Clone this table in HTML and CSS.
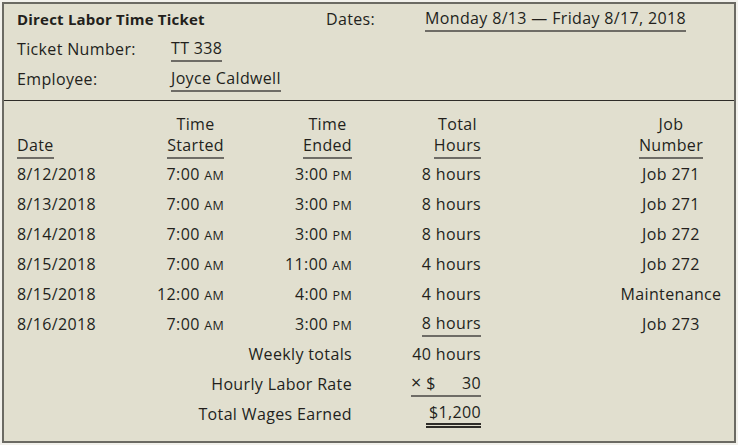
FILE: index.html
```html
<!DOCTYPE html>
<html>
<head>
<meta charset="utf-8">
<link rel="stylesheet" href="styles.css">
</head>
<body>
<div class="ticket">
  <div class="top">
    <div class="info-row">
      <div class="title">Direct Labor Time Ticket</div>
      <div class="dates-label">Dates:</div>
      <div class="dates-value"><span class="ul">Monday 8/13 — Friday 8/17, 2018</span></div>
    </div>
    <div class="info-row">
      <div class="label">Ticket Number:</div>
      <div class="value"><span class="ul">TT 338</span></div>
    </div>
    <div class="info-row">
      <div class="label">Employee:</div>
      <div class="value"><span class="ul">Joyce Caldwell</span></div>
    </div>
  </div>
  <div class="bottom">
    <div class="grid head">
      <div class="c1 hcell"><span class="ul">Date</span></div>
      <div class="c hcell"><div>Time</div><span class="ul">Started</span></div>
      <div class="c hcell"><div>Time</div><span class="ul">Ended</span></div>
      <div class="c hcell"><div>Total</div><span class="ul">Hours</span></div>
      <div class="job hcell"><div>Job</div><span class="ul">Number</span></div>
    </div>
    <div class="grid row"><div class="c1">8/12/2018</div><div class="c">7:00 <span class="sc">AM</span></div><div class="c">3:00 <span class="sc">PM</span></div><div class="c">8 hours</div><div class="job">Job 271</div></div>
    <div class="grid row"><div class="c1">8/13/2018</div><div class="c">7:00 <span class="sc">AM</span></div><div class="c">3:00 <span class="sc">PM</span></div><div class="c">8 hours</div><div class="job">Job 271</div></div>
    <div class="grid row"><div class="c1">8/14/2018</div><div class="c">7:00 <span class="sc">AM</span></div><div class="c">3:00 <span class="sc">PM</span></div><div class="c">8 hours</div><div class="job">Job 272</div></div>
    <div class="grid row"><div class="c1">8/15/2018</div><div class="c">7:00 <span class="sc">AM</span></div><div class="c">11:00 <span class="sc">AM</span></div><div class="c">4 hours</div><div class="job">Job 272</div></div>
    <div class="grid row"><div class="c1">8/15/2018</div><div class="c">12:00 <span class="sc">AM</span></div><div class="c">4:00 <span class="sc">PM</span></div><div class="c">4 hours</div><div class="job">Maintenance</div></div>
    <div class="grid row"><div class="c1">8/16/2018</div><div class="c">7:00 <span class="sc">AM</span></div><div class="c">3:00 <span class="sc">PM</span></div><div class="c"><span class="ul">8 hours</span></div><div class="job">Job 273</div></div>
    <div class="grid row"><div class="span3">Weekly totals</div><div class="c">40 hours</div></div>
    <div class="grid row"><div class="span3">Hourly Labor Rate</div><div class="c"><span class="ul rate"><span><span class="times">×</span> $</span><span>30</span></span></div></div>
    <div class="grid row"><div class="span3">Total Wages Earned</div><div class="c"><span class="dbl">$1,200</span></div></div>
  </div>
</div>
</body>
</html>
```

FILE: styles.css
```css
html, body {
  margin: 0;
  padding: 0;
  background: #f2f1ec;
}
body {
  font-family: "Open Sans", "Liberation Sans", sans-serif;
  font-size: 16px;
  letter-spacing: 0.35px;
  color: #231f1c;
}
.ticket {
  margin: 2px 0 0 2px;
  width: 730px;
  height: 437px;
  border: 2px solid #6b6a63;
  background: #e1dfcf;
}
.top {
  padding: 0 13px 6px 13px;
  border-bottom: 1px solid #2e2c28;
}
.info-row {
  display: flex;
  align-items: center;
  height: 30px;
}
.title {
  font-weight: 700;
  font-size: 15px;
  letter-spacing: 0.2px;
  width: 309px;
}
.dates-label {
  width: 99px;
}
.label {
  width: 154px;
}
.ul {
  display: inline-block;
  line-height: 20px;
  padding-bottom: 2px;
  border-bottom: 2px solid #6e6c66;
}
.bottom {
  padding: 12px 13px 0 13px;
}
.grid {
  display: grid;
  grid-template-columns: 100px 107px 128px 129px 240px;
}
.head {
  line-height: 21px;
  height: 46px;
}
.hcell {
  text-align: center;
  align-self: end;
}
.c1 {
  justify-self: start;
}
.head .c1 {
  text-align: left;
}
.c {
  justify-self: end;
}
.job {
  justify-self: end;
  width: 100px;
  display: flex;
  flex-direction: column;
  align-items: center;
  white-space: nowrap;
}
.head .job {
  align-self: end;
}
.row {
  height: 30px;
  align-items: center;
}
.span3 {
  grid-column: 1 / 4;
  justify-self: end;
}
.sc {
  font-size: 12.5px;
}
.times {
  font-size: 18px;
  line-height: 16px;
}
.rate {
  display: inline-flex;
  justify-content: space-between;
  width: 70px;
}
.dbl {
  display: inline-block;
  line-height: 20px;
  padding: 0 0 1px 3px;
  border-bottom: 5px double #2e2c28;
}
```
